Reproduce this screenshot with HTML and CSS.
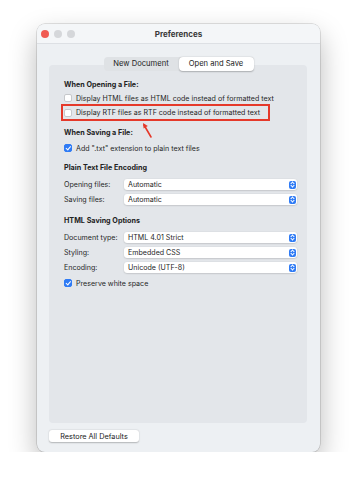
FILE: index.html
```html
<!DOCTYPE html>
<html lang="en">

<head>
    <meta charset="UTF-8">
    <meta name="viewport" content="width=device-width, initial-scale=1.0">
    <title>Preferences</title>
    <link rel="stylesheet" href="styles.css">
</head>

<body>
    <div class="window">
        <div class="title-bar">
            <div class="traffic">
                <span class="light red"></span>
                <span class="light"></span>
                <span class="light"></span>
            </div>
            <div class="title">Preferences</div>
        </div>

        <div class="content">
            <div class="tabs">
                <div class="tab">New Document</div>
                <div class="tab active">Open and Save</div>
            </div>

            <div class="panel">
                <div class="section-title">When Opening a File:</div>
                <label class="check-row">
                    <span class="checkbox"></span>
                    Display HTML files as HTML code instead of formatted text
                </label>
                <div class="highlight">
                    <label class="check-row">
                        <span class="checkbox"></span>
                        Display RTF files as RTF code instead of formatted text
                    </label>
                </div>

                <div class="section-title saving">When Saving a File:</div>
                <label class="check-row first">
                    <span class="checkbox checked"></span>
                    Add ".txt" extension to plain text files
                </label>

                <div class="section-title spaced">Plain Text File Encoding</div>
                <div class="select-row first">
                    <span class="select-label">Opening files:</span>
                    <div class="popup">Automatic<span class="popup-arrows"></span></div>
                </div>
                <div class="select-row">
                    <span class="select-label">Saving files:</span>
                    <div class="popup">Automatic<span class="popup-arrows"></span></div>
                </div>

                <div class="section-title html">HTML Saving Options</div>
                <div class="select-row first">
                    <span class="select-label">Document type:</span>
                    <div class="popup">HTML 4.01 Strict<span class="popup-arrows"></span></div>
                </div>
                <div class="select-row">
                    <span class="select-label">Styling:</span>
                    <div class="popup">Embedded CSS<span class="popup-arrows"></span></div>
                </div>
                <div class="select-row">
                    <span class="select-label">Encoding:</span>
                    <div class="popup">Unicode (UTF-8)<span class="popup-arrows"></span></div>
                </div>
                <label class="check-row last">
                    <span class="checkbox checked"></span>
                    Preserve white space
                </label>

                <!-- annotation arrow pointing at the highlighted option -->
                <svg class="pointer" width="14" height="18" viewBox="0 0 14 18">
                    <path d="M10 16 L3 4" stroke="#e5392a" stroke-width="1.6" fill="none" stroke-linecap="round" />
                    <path d="M2 2 L2.6 7.4 L6.8 5 Z" fill="#e5392a" />
                </svg>
            </div>

            <button class="restore-btn">Restore All Defaults</button>
        </div>
    </div>
</body>

</html>
```

FILE: styles.css
```css
body {
    margin: 0;
    background-color: #fff;
    font-family: 'Inter', 'Liberation Sans', sans-serif;
    color: #262626;
    padding: 24px 0 0 37px;
}

.window {
    width: 283px;
    height: 428px;
    background-color: #edf0f3;
    border-radius: 8px;
    box-shadow: 0 12px 28px rgba(0, 0, 0, 0.28), 0 0 0 0.5px rgba(0, 0, 0, 0.22);
    display: flex;
    flex-direction: column;
    overflow: hidden;
}

/* TITLE BAR */
.title-bar {
    height: 19px;
    background-color: #f4f6f8;
    border-bottom: 1px solid #dde0e4;
    position: relative;
    display: flex;
    align-items: center;
    justify-content: center;
}

.traffic {
    position: absolute;
    left: 4px;
    top: 6px;
    display: flex;
    gap: 5px;
}

.light {
    width: 8px;
    height: 8px;
    border-radius: 50%;
    background-color: #d5d7da;
}

.light.red {
    background-color: #f05a52;
}

.title {
    font-size: 8px;
    font-weight: 700;
    color: #3a3a3a;
}

/* CONTENT */
.content {
    flex: 1;
    display: flex;
    flex-direction: column;
    padding: 13px 13px 10px 12px;
}

.tabs {
    align-self: center;
    display: flex;
    height: 14px;
    background-color: #dfe2e5;
    border-radius: 4px;
    margin-bottom: -6px;
    position: relative;
    z-index: 1;
    margin-left: 1px;
}

.tab {
    width: 75px;
    font-size: 7.6px;
    line-height: 14px;
    text-align: center;
    color: #222;
}

.tab.active {
    background-color: #fff;
    border-radius: 4px;
    box-shadow: 0 0.5px 1.5px rgba(0, 0, 0, 0.25);
}

.panel {
    flex: 1;
    background-color: #e3e6ea;
    border-radius: 4px;
    padding: 14px 10px 0 15px;
    position: relative;
}

.section-title {
    height: 12px;
    line-height: 12px;
    font-size: 7.2px;
    font-weight: 700;
    color: #222;
}

.section-title.saving {
    margin-top: 6px;
}

.section-title.spaced {
    margin-top: 7px;
}

.section-title.html {
    margin-top: 8px;
}

.check-row {
    display: flex;
    align-items: center;
    gap: 4px;
    height: 14px;
    font-size: 7.1px;
    color: #262626;
    white-space: nowrap;
}

.check-row.first {
    margin-top: 2px;
}

.check-row.last {
    margin-top: 1px;
}

.checkbox {
    flex-shrink: 0;
    width: 6px;
    height: 6px;
    background-color: #fff;
    border: 0.8px solid #c6c8cb;
    border-radius: 2px;
    position: relative;
}

.checkbox.checked {
    background-color: #2f7bf5;
    border-color: #2f7bf5;
}

.checkbox.checked::after {
    content: "";
    position: absolute;
    left: 1.8px;
    top: 0.2px;
    width: 1.6px;
    height: 3.6px;
    border-right: 1.2px solid #fff;
    border-bottom: 1.2px solid #fff;
    transform: rotate(40deg);
}

.highlight {
    width: 209px;
    box-sizing: border-box;
    border: 2px solid #e5392a;
    margin: -1px 0 0 -3px;
    padding-left: 1px;
}

.highlight .check-row {
    height: 13px;
}

.select-row {
    display: flex;
    align-items: center;
    height: 15px;
    font-size: 7.1px;
    white-space: nowrap;
}

.select-row.first {
    margin-top: 3px;
}

.select-label {
    width: 60px;
}

.popup {
    width: 173px;
    height: 11px;
    box-sizing: border-box;
    background-color: #fff;
    border-radius: 3px;
    box-shadow: 0 0.5px 1.5px rgba(0, 0, 0, 0.22);
    display: flex;
    align-items: center;
    padding-left: 4px;
    position: relative;
}

.popup-arrows {
    position: absolute;
    right: 1.5px;
    top: 1.5px;
    width: 7px;
    height: 8px;
    background-color: #2f7bf5;
    border-radius: 2px;
}

.popup-arrows::before,
.popup-arrows::after {
    content: "";
    position: absolute;
    left: 2px;
    width: 2px;
    height: 2px;
    border-left: 1px solid #fff;
    border-top: 1px solid #fff;
}

.popup-arrows::before {
    top: 1.6px;
    transform: rotate(45deg);
}

.popup-arrows::after {
    bottom: 1.6px;
    transform: rotate(-135deg);
}

.pointer {
    position: absolute;
    left: 92px;
    top: 56px;
}

.restore-btn {
    align-self: flex-start;
    margin-top: 7px;
    height: 12px;
    width: 90px;
    padding: 0;
    border: none;
    background-color: #fff;
    border-radius: 3px;
    box-shadow: 0 0.5px 1.5px rgba(0, 0, 0, 0.25);
    font-family: 'Inter', 'Liberation Sans', sans-serif;
    font-size: 7.3px;
    color: #222;
}
```
